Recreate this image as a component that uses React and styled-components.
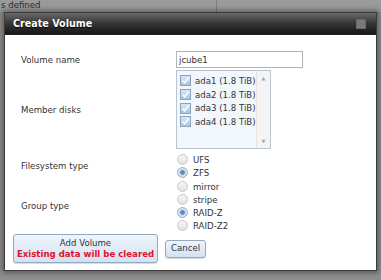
import React from "react";
import styled, { createGlobalStyle } from "styled-components";

const Global = createGlobalStyle`
  html, body {
    margin: 0;
    padding: 0;
    background: #8e8e8e;
    width: 381px;
    height: 280px;
    overflow: hidden;
    font-family: "DejaVu Sans", Verdana, sans-serif;
    font-size: 8.6px;
  }
`;

const Page = styled.div`
  position: relative;
  width: 381px;
  height: 280px;
`;

const TopStrip = styled.div`
  height: 12px;
  display: flex;
  background: #9a9a9a;
  color: #2a2a2a;
  font-size: 8.6px;
  line-height: 10px;
`;

const StripCell = styled.div`
  width: ${(p) => p.$w}px;
  padding-left: 1px;
  border-right: ${(p) => (p.$line ? "1px solid #7e7e7e" : "none")};
`;

const Dialog = styled.div`
  position: absolute;
  left: 4px;
  top: 12px;
  width: 371px;
  height: 257px;
  border: 1px solid #3a3a3a;
  background: #fff;
  box-shadow: 0 0 5px 2px rgba(0, 0, 0, 0.35);
  display: flex;
  flex-direction: column;
`;

const TitleBar = styled.div`
  height: 21px;
  display: flex;
  align-items: center;
  justify-content: space-between;
  padding: 0 10px 0 8px;
  background: linear-gradient(to bottom, #6a6a6a 0%, #3a3a3a 45%, #161616 100%);
  border-bottom: 1px solid #222;
`;

const Title = styled.span`
  color: #fff;
  font-weight: bold;
  font-size: 9.6px;
  text-shadow: 0 1px 1px #000;
`;

const CloseBox = styled.span`
  width: 8px;
  height: 8px;
  background: #7a7a7a;
  border: 1px solid #666;
`;

const Body = styled.div`
  padding: 16px 0 0 16px;
  display: flex;
  flex-direction: column;
`;

const Form = styled.div`
  display: grid;
  grid-template-columns: 155px 1fr;
  align-items: center;
  color: #333;
`;

const Label = styled.div`
  padding-top: ${(p) => p.$pt || 0}px;
`;

const Field = styled.div`
  padding-top: ${(p) => p.$pt || 0}px;
  display: flex;
  flex-direction: column;
`;

const TextInput = styled.input`
  box-sizing: border-box;
  width: 127px;
  height: 17px;
  border: 1px solid #b4b4b4;
  padding: 0 2px;
  font-family: inherit;
  font-size: 8.6px;
  color: #333;
  outline: none;
`;

const ListBox = styled.div`
  box-sizing: border-box;
  width: 95px;
  height: 79px;
  margin-top: 2px;
  border: 1px solid #b9c4cf;
  background: #f2f7fd;
  display: flex;
`;

const ListItems = styled.div`
  flex: 1;
  padding: 3px 0 0 3px;
  display: flex;
  flex-direction: column;
`;

const ListItem = styled.div`
  height: 13.7px;
  display: flex;
  align-items: center;
  gap: 4px;
  color: #333;
  white-space: nowrap;
`;

const Check = styled.span`
  box-sizing: border-box;
  width: 11px;
  height: 11px;
  border: 1px solid #8aa4c0;
  background: linear-gradient(to bottom, #d9e8f6, #a9c6e4);
  display: flex;
  align-items: center;
  justify-content: center;
`;

const ScrollTrack = styled.div`
  width: 13px;
  border-left: 1px solid #e4e4e4;
  background: #f4f4f4;
  display: flex;
  flex-direction: column;
  justify-content: space-between;
  align-items: center;
  padding: 4px 0;
  color: #a8a8a8;
  font-size: 5px;
`;

const RadioRow = styled.div`
  height: 13px;
  display: flex;
  align-items: center;
  gap: 5px;
  color: #333;
`;

const Radio = styled.span`
  box-sizing: border-box;
  width: 11px;
  height: 11px;
  margin-left: 1px;
  border-radius: 50%;
  border: 1px solid ${(p) => (p.$on ? "#9ab0c6" : "#c8c8c8")};
  background: ${(p) =>
    p.$on
      ? "radial-gradient(circle, #5d8fbf 0 2px, #c5d7e9 2.5px, #eef3f8 100%)"
      : "linear-gradient(to bottom, #f6f6f6, #e2e2e2)"};
`;

const ButtonRow = styled.div`
  display: flex;
  align-items: center;
  gap: 7px;
  margin: 2px 0 0 -8px;
`;

const Button = styled.button`
  box-sizing: border-box;
  font-family: inherit;
  font-size: 8.6px;
  color: #333;
  border: 1px solid #93a9c0;
  border-radius: 3px;
  background: linear-gradient(to bottom, #eef5fc, #d2e2f2);
  box-shadow: 0 1px 1px rgba(0, 0, 0, 0.15);
  padding: ${(p) => (p.$big ? "2px 4px" : "1px 5px")};
  width: ${(p) => (p.$big ? "145px" : "auto")};
  height: ${(p) => (p.$big ? "29px" : "18px")};
  line-height: 11px;
  display: flex;
  flex-direction: column;
  align-items: center;
  justify-content: center;
  white-space: nowrap;
`;

const Warning = styled.span`
  color: #e3102c;
  font-weight: bold;
`;

const disks = ["ada1", "ada2", "ada3", "ada4"];

const CheckMark = () => (
  <svg width="9" height="9" viewBox="0 0 9 9">
    <path d="M1.5 4.5 L3.6 6.8 L7.6 1.6" fill="none" stroke="#fff" strokeWidth="1.4" />
  </svg>
);

const App = () => (
  <Page>
    <Global />
    <TopStrip>
      <StripCell $w={216} $line>s defined</StripCell>
      <StripCell $w={164} />
    </TopStrip>
    <Dialog>
      <TitleBar>
        <Title>Create Volume</Title>
        <CloseBox />
      </TitleBar>
      <Body>
        <Form>
          <Label>Volume name</Label>
          <Field>
            <TextInput defaultValue="jcube1" />
          </Field>
          <Label $pt={2}>Member disks</Label>
          <Field>
            <ListBox>
              <ListItems>
                {disks.map((d) => (
                  <ListItem key={d}>
                    <Check>
                      <CheckMark />
                    </Check>
                    {d} (1.8 TiB)
                  </ListItem>
                ))}
              </ListItems>
              <ScrollTrack>
                <span>▲</span>
                <span>▼</span>
              </ScrollTrack>
            </ListBox>
          </Field>
          <Label $pt={4}>Filesystem type</Label>
          <Field $pt={4}>
            <RadioRow>
              <Radio />
              UFS
            </RadioRow>
            <RadioRow>
              <Radio $on />
              ZFS
            </RadioRow>
          </Field>
          <Label $pt={1}>Group type</Label>
          <Field $pt={1}>
            <RadioRow>
              <Radio />
              mirror
            </RadioRow>
            <RadioRow>
              <Radio />
              stripe
            </RadioRow>
            <RadioRow>
              <Radio $on />
              RAID-Z
            </RadioRow>
            <RadioRow>
              <Radio />
              RAID-Z2
            </RadioRow>
          </Field>
        </Form>
        <ButtonRow>
          <Button $big>
            <span>Add Volume</span>
            <Warning>Existing data will be cleared</Warning>
          </Button>
          <Button>Cancel</Button>
        </ButtonRow>
      </Body>
    </Dialog>
  </Page>
);

export default App;
